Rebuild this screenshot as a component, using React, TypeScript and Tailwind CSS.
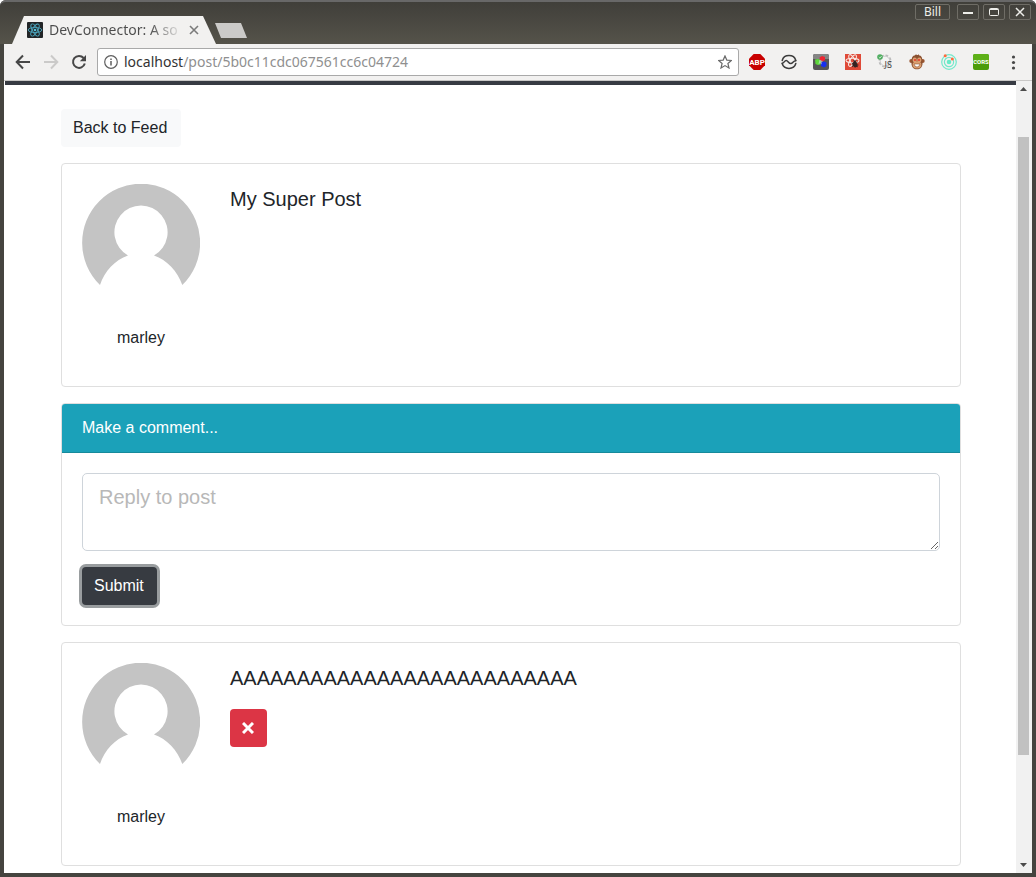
import React from "react";

function ReactLogo() {
  return (
    <svg viewBox="0 0 16 16" className="size-4 shrink-0" aria-hidden="true">
      <rect width="16" height="16" rx="1" fill="#222527" />
      <g fill="none" stroke="#4aa5bd" strokeWidth="0.9">
        <ellipse cx="8" cy="8" rx="6.8" ry="2.6" />
        <ellipse cx="8" cy="8" rx="6.8" ry="2.6" transform="rotate(60 8 8)" />
        <ellipse cx="8" cy="8" rx="6.8" ry="2.6" transform="rotate(120 8 8)" />
      </g>
      <circle cx="8" cy="8" r="1.3" fill="#56bfd8" />
    </svg>
  );
}

const frameButton =
  "flex h-4 items-center justify-center rounded-[2px] border border-[#6f6d66] text-[#eeeeea]";

function TitleBar() {
  return (
    <header className="flex h-11 items-stretch justify-between rounded-t-md border-t-2 border-[#686868] bg-linear-to-b from-[#403f3a] to-[#55534a] pl-3 pr-[5px]">
      <div className="flex items-end">
        <div className="flex h-7 w-[204px] items-center bg-[#f2f1f0] pl-[15px] pr-4 [clip-path:polygon(12px_0,calc(100%_-_13px)_0,100%_100%,0_100%)]">
          <ReactLogo />
          <span className="ml-1.5 w-[134px] whitespace-nowrap bg-linear-to-r from-[#4c4c4c] from-75% to-transparent bg-clip-text font-['Noto_Sans',sans-serif] text-sm text-transparent">
            DevConnector: A so
          </span>
          <button aria-label="Close tab" className="ml-1.5 shrink-0 text-[#7b7b7b]">
            <svg viewBox="0 0 10 10" className="size-2.5" stroke="currentColor" strokeWidth="1.6">
              <path d="M1 1l8 8M9 1L1 9" />
            </svg>
          </button>
        </div>
        <button
          aria-label="New tab"
          className="mb-1.5 -ml-px h-[15px] w-8 bg-[#cbcac8] [clip-path:polygon(0_0,26px_0,100%_100%,6px_100%)]"
        />
      </div>
      <div className="flex items-start pt-0.5">
        <button className={`${frameButton} mr-[7px] w-[35px] font-['Noto_Sans',sans-serif] text-xs leading-none`}>
          Bill
        </button>
        <div className="flex gap-1">
          <button aria-label="Minimize" className={`${frameButton} w-[22px]`}>
            <svg viewBox="0 0 10 10" className="size-2.5">
              <path d="M0 6h10" stroke="currentColor" strokeWidth="2" />
            </svg>
          </button>
          <button aria-label="Maximize" className={`${frameButton} w-[22px]`}>
            <svg viewBox="0 0 10 10" className="size-2.5" fill="none" stroke="currentColor">
              <rect x="0.5" y="1.5" width="9" height="7" rx="1" />
              <path d="M1 2.5h8" />
            </svg>
          </button>
          <button aria-label="Close" className={`${frameButton} w-[22px]`}>
            <svg viewBox="0 0 10 10" className="size-2.5" stroke="currentColor" strokeWidth="1.5">
              <path d="M1 1l8 8M9 1L1 9" />
            </svg>
          </button>
        </div>
      </div>
    </header>
  );
}

const extensions: { name: string; art: React.ReactNode }[] = [
  {
    name: "Adblock Plus",
    art: (
      <>
        <path d="M4.7 0h6.6L16 4.7v6.6L11.3 16H4.7L0 11.3V4.7z" fill="#c80000" />
        <text x="8" y="11" textAnchor="middle" fontSize="8" fontWeight="700" fill="#fff" fontFamily="Roboto, sans-serif">
          ABP
        </text>
      </>
    ),
  },
  {
    name: "Wave",
    art: (
      <g fill="none" stroke="#3c3c3c" strokeWidth="1.5" strokeLinecap="round">
        <path d="M1.200 6.500A7 6.400 0 0 1 14.800 6.500" />
        <path d="M1.200 9.500A7 6.400 0 0 0 14.800 9.500" />
        <path d="M1.200 9.300C3 9.300 3.400 6.500 5.200 6.500C7 6.500 7.600 9.600 9.800 9.600C11.800 9.600 12.200 6.700 14.800 6.700" />
      </g>
    ),
  },
  {
    name: "Color blocks",
    art: (
      <>
        <rect width="16" height="16" rx="2" fill="#565656" />
        <path d="M0 2A2 2 0 0 1 2 0h12a2 2 0 0 1 2 2v3H0z" fill="#858585" />
        <path d="M6.500 3.500L9 2l3 1v3L10 7.500 7 6.500z" fill="#ee2632" />
        <path d="M2 5.500L5 5l2.500 1v4.500L5 11l-2.500-1z" fill="#5ed83c" />
        <path d="M8 8.500l3-1 2.500 1V12L11 13.500 8 12z" fill="#1730ef" />
        <path d="M6.500 5.500l1.500 1 2 .5-1.500 1.500.5 2-1.700-1.200-1.800.7.500-2z" fill="#d2eaea" opacity=".6" />
      </>
    ),
  },
  {
    name: "React developer tools",
    art: (
      <>
        <rect width="16" height="16" fill="#df4937" />
        <g fill="none" stroke="#f7e6e2" strokeWidth="1.1">
          <ellipse cx="7.5" cy="6.500" rx="6.500" ry="2.300" />
          <ellipse cx="7.5" cy="6.500" rx="6.500" ry="2.300" transform="rotate(60 7.5 6.5)" />
          <ellipse cx="7.5" cy="6.500" rx="6.500" ry="2.300" transform="rotate(120 7.5 6.5)" />
        </g>
        <ellipse cx="10" cy="10.500" rx="2.400" ry="3" fill="#352322" transform="rotate(-20 10 10.5)" />
        <path d="M6.500 9l6.500 4M7 13l5.500-5M7 11h6.500M8.500 6.500l1.500 2 1-2" stroke="#352322" strokeWidth=".8" />
      </>
    ),
  },
  {
    name: "Script toggle",
    art: (
      <>
        <circle cx="8" cy="7" r="5.500" fill="#f0f0f0" stroke="#bcbcbc" strokeWidth="2" strokeDasharray="2.600 1.700" />
        <circle cx="8" cy="7" r="4.800" fill="#f3f3f3" stroke="#c4c4c4" strokeWidth=".8" />
        <circle cx="3" cy="3" r="2.800" fill="#4fad60" />
        <path d="M1.800 3l1.200 1.200L4.600 2" fill="none" stroke="#d9f1dc" strokeWidth=".8" />
        <text x="7.5" y="14" fontSize="9" fill="#333" fontFamily="Open Sans, sans-serif">
          JS
        </text>
      </>
    ),
  },
  {
    name: "Monkey",
    art: (
      <>
        <circle cx="2.300" cy="7" r="2" fill="#99552f" />
        <circle cx="13.700" cy="7" r="2" fill="#99552f" />
        <path d="M8 1c4 0 5.500 2 5.300 6 1 5-1.300 8.300-5.300 8.300S1.700 12 2.700 7C2.500 3 4 1 8 1z" fill="#8b5131" />
        <path d="M6 2l1-2 1 1.500L10 .2V2z" fill="#8b5131" />
        <ellipse cx="5.700" cy="6" rx="2.100" ry="2.400" fill="#dca071" />
        <ellipse cx="10.300" cy="6" rx="2.100" ry="2.400" fill="#dca071" />
        <ellipse cx="8" cy="10.800" rx="4.400" ry="3.600" fill="#dca071" />
        <circle cx="6" cy="6" r="1.100" fill="#e53b2d" />
        <circle cx="10" cy="6" r="1.100" fill="#e53b2d" />
        <path d="M5 10h6q-.7 3-3 3t-3-3z" fill="#fff" stroke="#8b5131" strokeWidth=".6" />
      </>
    ),
  },
  {
    name: "Orbit",
    art: (
      <>
        <g fill="none" stroke="#72e8ca" strokeWidth="1.200">
          <circle cx="8" cy="8" r="7.300" />
          <circle cx="8" cy="8" r="4.600" />
        </g>
        <circle cx="8" cy="8" r="2.300" fill="#68eac7" />
        <circle cx="4.200" cy="1.800" r="1.500" fill="#ff6a3c" />
        <circle cx="11.300" cy="5" r="1.500" fill="#ff6a3c" />
      </>
    ),
  },
  {
    name: "CORS",
    art: (
      <>
        <rect width="16" height="16" rx="2" fill="#4c9c0b" />
        <path d="M0 2A2 2 0 0 1 2 0h12a2 2 0 0 1 2 2v6H0z" fill="#5eb018" />
        <text x="8" y="10.300" textAnchor="middle" fontSize="6" fontWeight="700" fill="#fff" fontFamily="Roboto, sans-serif">
          CORS
        </text>
      </>
    ),
  },
];

function Toolbar() {
  return (
    <nav className="flex h-[37px] items-center border-b border-[#c9c8c7] bg-[#f2f1f0] pl-[11px] pr-[11px]">
      <div className="flex gap-3">
        <button aria-label="Back" className="text-[#474747]">
          <svg viewBox="0 0 16 16" className="size-4" fill="none" stroke="currentColor" strokeWidth="2">
            <path d="M15 8H2M8 1.5L1.7 8 8 14.5" />
          </svg>
        </button>
        <button aria-label="Forward" className="text-[#cbcac9]">
          <svg viewBox="0 0 16 16" className="size-4" fill="none" stroke="currentColor" strokeWidth="2">
            <path d="M1 8h13M8 1.5L14.3 8 8 14.5" />
          </svg>
        </button>
        <button aria-label="Reload" className="text-[#474747]">
          <svg viewBox="0 0 16 16" className="size-4" fill="none" stroke="currentColor" strokeWidth="2">
            <path d="M12.6 4A6 6 0 1 0 13.8 9.5" />
            <path d="M15 1v6.2H8.8z" fill="currentColor" stroke="none" />
          </svg>
        </button>
      </div>
      <div className="ml-2.5 mr-2.5 flex h-7 flex-1 items-center rounded-[3px] border border-[#a9a9a9] bg-white px-1.5">
        <svg viewBox="0 0 14 14" className="size-3.5 shrink-0" fill="none" stroke="#5f5f5f" aria-hidden="true">
          <circle cx="7" cy="7" r="6.3" strokeWidth="1.2" />
          <path d="M7 6v4.5M7 3.4v1.5" strokeWidth="1.5" />
        </svg>
        <span className="ml-1.5 flex-1 whitespace-nowrap font-['Noto_Sans',sans-serif] text-sm text-[#8f8f8f]">
          <span className="text-[#333333]">localhost</span>/post/5b0c11cdc067561cc6c04724
        </span>
        <button aria-label="Bookmark this page" className="text-[#6a6a6a]">
          <svg viewBox="0 0 14 14" className="size-3.5" fill="none" stroke="currentColor" strokeWidth="1.2">
            <path d="M7 .9l1.8 4.2 4.6.4-3.5 3 1.1 4.5L7 10.6 3 13l1.1-4.5-3.5-3 4.6-.4z" />
          </svg>
        </button>
      </div>
      <div className="flex gap-4">
        {extensions.map((ext) => (
          <button key={ext.name} aria-label={ext.name}>
            <svg viewBox="0 0 16 16" className="size-4 overflow-visible">
              {ext.art}
            </svg>
          </button>
        ))}
        <button aria-label="Menu">
          <svg viewBox="0 0 16 16" className="size-4" fill="#474747">
            <circle cx="8.5" cy="3" r="1.6" />
            <circle cx="8.5" cy="8.500" r="1.6" />
            <circle cx="8.5" cy="14" r="1.6" />
          </svg>
        </button>
      </div>
    </nav>
  );
}

function Scrollbar() {
  return (
    <div className="flex w-4 shrink-0 flex-col items-center bg-[#f1f1f1] pr-px" aria-hidden="true">
      <svg viewBox="0 0 15 15" className="h-[15px] w-[15px]">
        <path d="M4 10h7L7.5 6z" fill="#4b4b4b" />
      </svg>
      <div className="grow-[41]" />
      <div className="w-[11px] grow-[618] bg-[#c1c1c1]" />
      <div className="grow-[103]" />
      <svg viewBox="0 0 15 15" className="h-[15px] w-[15px]">
        <path d="M4 5h7L7.5 9z" fill="#4b4b4b" />
      </svg>
    </div>
  );
}

function Avatar() {
  return (
    <svg viewBox="0 0 118 118" className="block w-full" role="img" aria-label="User avatar">
      <path
        d="M18 101A59 59 0 1 1 100.300 101C95.500 87 85 76 72 71.400A26.600 26.600 0 1 0 46 71.400C33 76 22.500 87 18 101z"
        fill="#c4c4c4"
      />
    </svg>
  );
}

function PostCard({ author, text, removable = false }: { author: string; text: string; removable?: boolean }) {
  return (
    <article className="mb-4 flex rounded border border-[#dfdfdf] bg-white p-5">
      <div className="w-[118px] shrink-0">
        <a href="#profile">
          <Avatar />
        </a>
        <p className="mt-6 mb-4 text-center">{author}</p>
      </div>
      <div className="ml-[30px] min-w-0 flex-1">
        <p className="mb-4 text-xl leading-[30px]">{text}</p>
        {removable && (
          <button
            aria-label="Delete comment"
            className="flex h-[38px] w-[37px] items-center justify-center rounded bg-[#dc3545] pr-px pb-px text-white"
          >
            <svg viewBox="0 0 12 12" className="size-3" stroke="currentColor" strokeWidth="3">
              <path d="M1 1l10 10M11 1L1 11" />
            </svg>
          </button>
        )}
      </div>
    </article>
  );
}

function CommentForm() {
  return (
    <section className="mb-4 rounded border border-[#dfdfdf] bg-white">
      <h2 className="rounded-t-[3px] border-b border-[#178a9b] bg-[#1ba1b9] px-5 py-3 text-white">
        Make a comment...
      </h2>
      <form className="p-5" onSubmit={(e) => e.preventDefault()}>
        <textarea
          aria-label="Reply to post"
          placeholder="Reply to post"
          rows={2}
          className="mb-4 block w-full resize rounded-[5px] border border-[#ced4da] bg-white px-4 py-2 text-xl leading-[30px] placeholder:text-[#b8b8b8] focus:outline-none"
        />
        <button
          type="submit"
          className="block h-[38px] rounded bg-[#373b41] pr-[13px] pl-3 text-white shadow-[0_0_0_3px_#999d9f]"
        >
          Submit
        </button>
      </form>
    </section>
  );
}

export default function App() {
  return (
    <div className="bg-white">
      <div className="flex min-h-screen flex-col rounded-t-md bg-[#45443f] font-['Liberation_Sans',Arial,sans-serif] text-base text-[#212529]">
        <TitleBar />
        <div className="mx-1 mb-1 flex flex-1 flex-col bg-white">
          <Toolbar />
          <div className="flex flex-1">
            <main className="min-w-0 flex-1 pl-px">
              <div className="h-1 bg-[#373b43]" />
              <div className="pt-6 pr-[55px] pb-[3px] pl-14">
                <a href="#feed" className="mb-4 block h-[38px] w-fit rounded bg-[#f8f9fa] pr-[14px] pl-3 leading-[38px]">
                  Back to Feed
                </a>
                <PostCard author="marley" text="My Super Post" />
                <CommentForm />
                <div className="-mb-3">
                  <PostCard author="marley" text="AAAAAAAAAAAAAAAAAAAAAAAAAA" removable />
                </div>
              </div>
            </main>
            <Scrollbar />
          </div>
        </div>
      </div>
    </div>
  );
}
